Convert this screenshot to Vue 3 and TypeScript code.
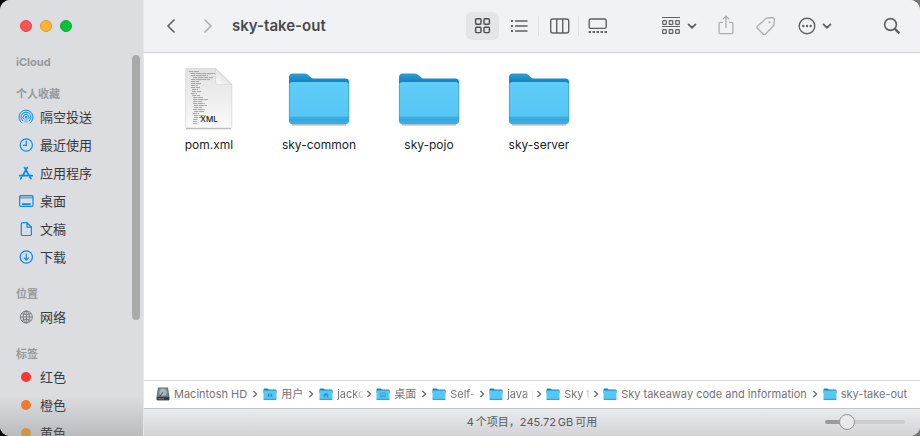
<script setup lang="ts">
import { computed, ref } from 'vue'

type ViewMode = 'icons' | 'list' | 'columns' | 'gallery'

interface Crumb {
  name: string
  kind: 'disk' | 'folder' | 'users' | 'home' | 'desktop'
  clipped?: boolean
}

const favorites = [
  { name: '隔空投送', icon: 'airdrop' },
  { name: '最近使用', icon: 'recent' },
  { name: '应用程序', icon: 'apps' },
  { name: '桌面', icon: 'desktop' },
  { name: '文稿', icon: 'document' },
  { name: '下载', icon: 'download' },
]

const tags = [
  { name: '红色', color: '#fc3438' },
  { name: '橙色', color: '#f97a2c' },
  { name: '黄色', color: '#f2a62e' },
]

const files = [
  { name: 'pom.xml', folder: false },
  { name: 'sky-common', folder: true },
  { name: 'sky-pojo', folder: true },
  { name: 'sky-server', folder: true },
]

const crumbs: Crumb[] = [
  { name: 'Macintosh HD', kind: 'disk' },
  { name: '用户', kind: 'users' },
  { name: 'jackc', kind: 'home', clipped: true },
  { name: '桌面', kind: 'desktop' },
  { name: 'Self-', kind: 'folder', clipped: true },
  { name: 'java p', kind: 'folder', clipped: true },
  { name: 'Sky t', kind: 'folder', clipped: true },
  { name: 'Sky takeaway code and information', kind: 'folder' },
  { name: 'sky-take-out', kind: 'folder' },
]

// Indent and length of each source line on the document thumbnail.
const codeLines: [number, number][] = [
  [4, 10], [6, 24], [6, 17], [8, 20], [6, 19], [6, 8], [6, 10], [6, 7], [6, 9], [7, 6],
  [7, 9], [6, 6], [7, 8], [8, 10], [8, 15], [8, 9], [8, 12], [9, 13], [9, 8], [8, 12],
  [9, 10], [8, 6], [9, 12], [9, 9], [8, 5], [8, 5], [8, 5],
]

const view = ref<ViewMode>('icons')
const zoom = ref(22)
const fill = computed(() => `${zoom.value}%`)
</script>

<template>
  <div class="window">
    <aside class="sidebar">
      <div class="lights">
        <button class="light close" aria-label="Close"></button>
        <button class="light minimize" aria-label="Minimize"></button>
        <button class="light expand" aria-label="Zoom"></button>
      </div>
      <nav class="places">
        <h2>iCloud</h2>
        <h2 class="fav">个人收藏</h2>
        <ul>
          <li v-for="item in favorites" :key="item.name">
            <a href="#">
              <svg v-if="item.icon === 'airdrop'" class="place-icon" viewBox="0 0 16 16">
                <path d="M4.2 14A7 7 0 1 1 11.8 14M5.2 12.1A4.9 4.9 0 1 1 10.8 12.1M6.3 10.4A2.8 2.8 0 1 1 9.7 10.4" stroke-width="1" />
                <path d="M8 8.2L5.8 13.6H10.2Z" fill="currentColor" stroke="none" opacity=".35" />
                <circle cx="8" cy="8.2" r="1.1" fill="currentColor" stroke="none" />
              </svg>
              <svg v-else-if="item.icon === 'recent'" class="place-icon" viewBox="0 0 16 16">
                <circle cx="8.3" cy="8" r="6.1" />
                <path d="M8.3 3.8V8.4H5" />
              </svg>
              <svg v-else-if="item.icon === 'apps'" class="place-icon" viewBox="0 0 16 16">
                <path d="M9.2 2.6L4.6 10.8M6.6 2.6L12.9 13.6M1.6 10.7H9.2M12 10.7H14.2M3.3 12.7L2.7 13.7" stroke-width="1.8" stroke-linecap="round" />
              </svg>
              <svg v-else-if="item.icon === 'desktop'" class="place-icon" viewBox="0 0 16 16">
                <rect x="1.6" y="2.6" width="13.4" height="10.8" rx="1.2" />
                <path d="M1.6 4.6H15" opacity=".6" stroke-width="1.8" />
                <path d="M4 11.2H12.6" stroke-width="1.8" />
              </svg>
              <svg v-else-if="item.icon === 'document'" class="place-icon" viewBox="0 0 16 16">
                <path d="M4.6 1.6H9L13.4 6.1V13.2A1.3 1.3 0 0 1 12.1 14.5H4.6A1.3 1.3 0 0 1 3.3 13.2V2.9A1.3 1.3 0 0 1 4.6 1.6ZM9 1.9V6.2H13.2" />
              </svg>
              <svg v-else class="place-icon" viewBox="0 0 16 16">
                <circle cx="8.3" cy="8" r="6.1" />
                <path d="M8.3 4.6V11M5.8 8.7L8.3 11.2L10.8 8.7" />
              </svg>
              <span>{{ item.name }}</span>
            </a>
          </li>
        </ul>
        <h2 class="spaced">位置</h2>
        <ul>
          <li>
            <a href="#">
              <svg class="place-icon grey" viewBox="0 0 16 16">
                <circle cx="8.3" cy="8" r="6" />
                <ellipse cx="8.3" cy="8" rx="3" ry="6" />
                <path d="M8.3 2V14M2.3 8H14.3M3.6 4.7Q8.3 6.4 13 4.7M3.6 11.3Q8.3 9.6 13 11.3" />
              </svg>
              <span>网络</span>
            </a>
          </li>
        </ul>
        <h2 class="spaced">标签</h2>
        <ul>
          <li v-for="tag in tags" :key="tag.name">
            <a href="#">
              <i class="dot" :style="{ background: tag.color }"></i>
              <span>{{ tag.name }}</span>
            </a>
          </li>
        </ul>
      </nav>
      <div class="scroll-thumb"></div>
      <div class="fade"></div>
    </aside>

    <main class="main">
      <header class="toolbar">
        <button class="tool" aria-label="Back">
          <svg width="14" height="20" viewBox="0 0 14 20"><path d="M10.5 3.5L4 10L10.5 16.5" stroke-width="1.6" /></svg>
        </button>
        <button class="tool forward dim" aria-label="Forward">
          <svg width="14" height="20" viewBox="0 0 14 20"><path d="M4.5 3.5L11 10L4.5 16.5" stroke-width="1.6" /></svg>
        </button>
        <h1>sky-take-out</h1>

        <div class="views">
          <button class="view" :class="{ active: view === 'icons' }" aria-label="Icons" @click="view = 'icons'">
            <svg width="20" height="20" viewBox="0 0 20 20">
              <rect x="2.6" y="2.8" width="5.4" height="5.4" rx="1" />
              <rect x="11" y="2.8" width="5.4" height="5.4" rx="1" />
              <rect x="2.6" y="11.2" width="5.4" height="5.4" rx="1" />
              <rect x="11" y="11.2" width="5.4" height="5.4" rx="1" />
            </svg>
          </button>
          <button class="view" :class="{ active: view === 'list' }" aria-label="List" @click="view = 'list'">
            <svg width="20" height="20" viewBox="0 0 20 20">
              <path d="M6 5H18.5M6 10H18.5M6 15H18.5" />
              <path d="M2 5H4M2 10H4M2 15H4" stroke-width="2" />
            </svg>
          </button>
          <span class="rule"></span>
          <button class="view" :class="{ active: view === 'columns' }" aria-label="Columns" @click="view = 'columns'">
            <svg width="22" height="20" viewBox="0 0 22 20">
              <rect x="2.7" y="3" width="18" height="14" rx="2" />
              <path d="M8.7 3V17M14.7 3V17" />
            </svg>
          </button>
          <span class="rule"></span>
          <button class="view" :class="{ active: view === 'gallery' }" aria-label="Gallery" @click="view = 'gallery'">
            <svg width="22" height="20" viewBox="0 0 22 20">
              <rect x="1.2" y="3" width="17" height="9.4" rx="1.6" />
              <path d="M.6 16H19.4" stroke-width="2.2" stroke-dasharray="2.4 1.6" />
            </svg>
          </button>
        </div>

        <button class="tool group" aria-label="Group">
          <svg width="20" height="20" viewBox="0 0 20 20">
            <path d="M1 1.5H19M1 10.5H19" stroke-width="1.2" />
            <g stroke-width="1.2">
              <rect x="1.7" y="4.7" width="3.6" height="3.6" rx=".6" />
              <rect x="8.2" y="4.7" width="3.6" height="3.6" rx=".6" />
              <rect x="14.7" y="4.7" width="3.6" height="3.6" rx=".6" />
              <rect x="1.7" y="13.7" width="3.6" height="3.6" rx=".6" />
              <rect x="8.2" y="13.7" width="3.6" height="3.6" rx=".6" />
              <rect x="14.7" y="13.7" width="3.6" height="3.6" rx=".6" />
            </g>
          </svg>
          <svg width="10" height="8" viewBox="0 0 10 8"><path d="M1.5 2.4L5 5.7L8.5 2.4" stroke-width="1.8" stroke-linecap="round" /></svg>
        </button>
        <button class="tool share dim" aria-label="Share">
          <svg width="18" height="22" viewBox="0 0 18 22">
            <path d="M6 7.4H3.4A1.3 1.3 0 0 0 2.1 8.7V17.4A1.3 1.3 0 0 0 3.4 18.7H14.6A1.3 1.3 0 0 0 15.9 17.4V8.7A1.3 1.3 0 0 0 14.6 7.4H12M9 13V1.2M5.7 4.4L9 1.1L12.3 4.4" stroke-width="1.3" />
          </svg>
        </button>
        <button class="tool tag dim" aria-label="Tags">
          <svg width="22" height="22" viewBox="0 0 22 22">
            <path d="M12.3 3L17.6 2.6A1.8 1.8 0 0 1 19.4 4.4L19 9.4A2 2 0 0 1 18.4 10.7L10.4 19.3A1.4 1.4 0 0 1 8.4 19.3L2.3 13.2A1.4 1.4 0 0 1 2.3 11.2L11 3.6A2 2 0 0 1 12.3 3Z" stroke-width="1.3" />
            <circle cx="14.6" cy="7.3" r="1.1" fill="currentColor" stroke="none" />
          </svg>
        </button>
        <button class="tool more" aria-label="More">
          <svg width="18" height="18" viewBox="0 0 18 18">
            <circle cx="9" cy="9" r="7.8" />
            <g fill="currentColor" stroke="none"><circle cx="5.3" cy="9" r="1.2" /><circle cx="9" cy="9" r="1.2" /><circle cx="12.7" cy="9" r="1.2" /></g>
          </svg>
          <svg width="10" height="8" viewBox="0 0 10 8"><path d="M1.5 2.4L5 5.7L8.5 2.4" stroke-width="1.8" stroke-linecap="round" /></svg>
        </button>
        <button class="tool search" aria-label="Search">
          <svg width="20" height="20" viewBox="0 0 20 20">
            <circle cx="8.5" cy="8.5" r="5.9" stroke-width="1.6" />
            <path d="M12.9 12.9L17.4 17.4" stroke-width="2.2" />
          </svg>
        </button>
      </header>

      <section class="files">
        <a v-for="file in files" :key="file.name" href="#" class="file">
          <svg v-if="file.folder" class="file-icon" viewBox="0 0 64 64">
            <defs>
              <linearGradient id="folder-back" x1="0" y1="0" x2="0" y2="1">
                <stop offset="0" stop-color="#2ba0d4" />
                <stop offset=".3" stop-color="#1687c2" />
                <stop offset="1" stop-color="#1687c2" />
              </linearGradient>
              <linearGradient id="folder-front" x1="0" y1="0" x2="0" y2="1">
                <stop offset="0" stop-color="#5fcdf8" />
                <stop offset="1" stop-color="#55c5f5" />
              </linearGradient>
            </defs>
            <path d="M5 58.8H59" stroke="#7b8d98" stroke-width="1.4" opacity=".6" />
            <path d="M2 11.5Q2 7.6 5.6 7.6H17.5Q19.6 7.6 21.2 9L24.2 11.4Q25.6 12.6 27.6 12.6H58.4Q62 12.6 62 16.2V30H2Z" fill="url(#folder-back)" />
            <path d="M2 20Q2 16 5.6 16H58.4Q62 16 62 20V54.6Q62 58 58.4 58H5.6Q2 58 2 54.6Z" fill="url(#folder-front)" />
            <path d="M2 51.5H62V54.6Q62 58 58.4 58H5.6Q2 58 2 54.6Z" fill="#3aaee2" />
            <path d="M2 51.2H62M2 53.9H62" stroke="#2f9fd4" stroke-width=".7" />
            <path d="M2.4 19V55M61.6 19V55" stroke="#36a5d8" stroke-width=".8" />
          </svg>
          <svg v-else class="file-icon" viewBox="0 0 64 64">
            <defs>
              <linearGradient id="paper" x1="0" y1="0" x2="0" y2="1">
                <stop offset="0" stop-color="#e2e2e2" />
                <stop offset="1" stop-color="#fafafa" />
              </linearGradient>
              <linearGradient id="curl" x1="0" y1="1" x2="1" y2="0">
                <stop offset="0" stop-color="#ffffff" />
                <stop offset=".5" stop-color="#e4e4e4" />
                <stop offset="1" stop-color="#bdbdbd" />
              </linearGradient>
            </defs>
            <path d="M9 62.6H54" stroke="#b3b3b3" stroke-width="1.2" />
            <path d="M10 2.4H38.6L54.8 18.4V60.6Q54.8 62 53.4 62H10Q8.6 62 8.6 60.6V3.8Q8.6 2.4 10 2.4Z" fill="url(#paper)" stroke="#d2d2d2" stroke-width=".7" />
            <path
              v-for="(line, i) in codeLines"
              :key="i"
              :d="`M${8 + line[0]} ${5.6 + i * 2}h${line[1]}`"
              stroke="#9a9a9a"
              stroke-width=".9"
              stroke-dasharray="4 .7 6 .5"
            />
            <path d="M38.6 2.4V16Q38.6 18.4 41 18.4H54.8Z" fill="url(#curl)" stroke="#d2d2d2" stroke-width=".6" />
            <text x="32" y="56" text-anchor="middle" class="badge">XML</text>
          </svg>
          <span>{{ file.name }}</span>
        </a>
      </section>

      <nav class="path">
        <a v-for="(crumb, i) in crumbs" :key="crumb.name" href="#" class="crumb">
          <svg v-if="crumb.kind === 'disk'" class="crumb-icon" viewBox="0 0 14 14">
            <path d="M2 .6H12L13.3 9V12.4Q13.3 13.2 12.5 13.2H1.5Q.7 13.2 .7 12.4V9Z" fill="#59656a" />
            <path d="M2.5 1H11.5L12.6 9.4H1.4Z" fill="#76838a" />
            <ellipse cx="7" cy="5.2" rx="3.6" ry="3.6" fill="#a9b7b9" />
            <path d="M7 5.2L4 9" stroke="#4a5558" />
            <path d="M.7 10H13.3V12.4Q13.3 13.2 12.5 13.2H1.5Q.7 13.2 .7 12.4Z" fill="#364044" />
            <path d="M2 11.8H8" stroke="#7f8b8f" stroke-width=".8" />
          </svg>
          <svg v-else class="crumb-icon" viewBox="0 0 14 14">
            <path d="M.5 2.4Q.5 1.4 1.5 1.4H4.4L5.8 2.4H12.5Q13.5 2.4 13.5 3.4V6H.5Z" fill="#1985b8" />
            <path d="M.5 4.4Q.5 3.6 1.3 3.6H12.7Q13.5 3.6 13.5 4.4V12Q13.5 13 12.5 13H1.5Q.5 13 .5 12Z" fill="#55c8f7" />
            <path d="M.5 11.8H13.5V12Q13.5 13 12.5 13H1.5Q.5 13 .5 12Z" fill="#34a4d4" />
            <path v-if="crumb.kind === 'users'" d="M6.4 6Q4.2 7.2 4.7 9.8H6.3ZM7.6 6Q9.8 7.2 9.3 9.8H7.7Z" fill="#1c8fca" />
            <path v-if="crumb.kind === 'home'" d="M7 5.4L10.2 8.1H9.4V10.4H7.8V8.8H6.2V10.4H4.6V8.1H3.8Z" fill="#2b9bd0" />
            <path v-if="crumb.kind === 'desktop'" d="M4.4 6H9.6V9.8H4.4ZM5.2 8.7H8.8" fill="none" stroke="#2b9bd0" stroke-width=".8" />
          </svg>
          <span class="crumb-name" :class="{ clipped: crumb.clipped }">{{ crumb.name }}</span>
          <svg v-if="i < crumbs.length - 1" class="next" :class="{ tight: crumb.clipped }" viewBox="0 0 6 8">
            <path d="M1.4 1L4.6 4L1.4 7" />
          </svg>
        </a>
      </nav>

      <footer class="status">
        <p>4&#8201;个项目，245.72&#8201;GB&#8201;可用</p>
        <input v-model.number="zoom" type="range" min="0" max="100" aria-label="Icon size" :style="{ '--fill': fill }" />
      </footer>
    </main>
  </div>
</template>

<style>
body {
  background: linear-gradient(90deg, #08080a 0 50%, #77776f 50%);
}
</style>

<style scoped>
* {
  box-sizing: border-box;
}

.window {
  display: flex;
  height: 100vh;
  overflow: hidden;
  border-radius: 10px;
  background: #fff;
  font-family: Inter, "Noto Sans CJK SC", sans-serif;
  color: #262626;
}

h1, h2, p, ul {
  margin: 0;
  padding: 0;
}

ul {
  list-style: none;
}

a {
  color: inherit;
  text-decoration: none;
}

button {
  padding: 0;
  border: 0;
  background: none;
  color: #5f6063;
  font: inherit;
}

svg {
  display: block;
  flex: none;
}

.sidebar {
  position: relative;
  flex: none;
  width: 144px;
  overflow: hidden;
  border-right: 1px solid #e6e7ea;
  background: #dcdde1;
}

.lights {
  display: flex;
  gap: 8px;
  padding: 20px 20px 0;
}

.light {
  width: 12px;
  height: 12px;
  border: 1px solid;
  border-radius: 50%;
}

.close {
  border-color: #e2443f;
  background: #ff5450;
}

.minimize {
  border-color: #e09a2b;
  background: #ffb233;
}

.expand {
  border-color: #12a72f;
  background: #05c238;
}

.places {
  padding: 22px 16px 0;
}

h2 {
  height: 16px;
  font-size: 11px;
  line-height: 16px;
  font-weight: 700;
  color: #97989b;
}

.fav {
  margin-top: 16px;
  margin-bottom: 1px;
}

.spaced {
  margin-top: 15px;
  margin-bottom: 1px;
}

li a {
  display: flex;
  align-items: center;
  gap: 6px;
  height: 28px;
  padding-left: 2px;
  font-size: 13px;
  line-height: 28px;
  color: #39393b;
  white-space: nowrap;
}

.place-icon {
  width: 16px;
  height: 16px;
  fill: none;
  color: #078ce8;
  stroke: currentColor;
  stroke-width: 1.2;
}

.grey {
  color: #717275;
  stroke-width: 0.9;
}

.dot {
  width: 10px;
  height: 10px;
  margin: 0 3px;
  border-radius: 50%;
}

.scroll-thumb {
  position: absolute;
  top: 55px;
  right: 3px;
  width: 8px;
  height: 265px;
  border-radius: 4px;
  background: #a9aaac;
}

.fade {
  position: absolute;
  inset: auto 0 0;
  height: 40px;
  background: linear-gradient(rgba(110, 110, 112, 0), rgba(110, 110, 112, 0.3));
}

.main {
  display: flex;
  flex: 1;
  flex-direction: column;
  min-width: 0;
}

.toolbar {
  display: flex;
  flex: none;
  align-items: center;
  height: 53px;
  padding: 0 14px 0 13px;
  border-bottom: 1px solid #cfd0d1;
  background: #f1f2f6;
}

.toolbar svg {
  fill: none;
  stroke: currentColor;
  stroke-width: 1.4;
  stroke-linecap: butt;
}

.tool {
  display: flex;
  flex: none;
  align-items: center;
  justify-content: center;
  width: 28px;
  height: 28px;
}

.dim {
  color: #adaeb1;
}

.forward {
  margin-left: 8px;
}

h1 {
  margin-left: 11px;
  font-size: 15px;
  line-height: 20px;
  font-weight: 600;
  color: #48494b;
  white-space: nowrap;
}

.views {
  display: flex;
  align-items: center;
  gap: 3px;
  margin-left: auto;
}

.view {
  display: flex;
  align-items: center;
  justify-content: center;
  width: 33px;
  height: 28px;
  border-radius: 6px;
}

.active {
  background: #e4e5e8;
  color: #4c4d50;
}

.rule {
  width: 1px;
  height: 20px;
  background: #dfe0e3;
}

.group,
.more {
  gap: 6px;
  width: 36px;
}

.group {
  margin-left: 46px;
}

.share {
  margin-left: 15px;
}

.tag {
  margin-left: 12px;
}

.more {
  margin-left: 17px;
}

.search {
  margin-left: 45px;
}

.files {
  display: grid;
  flex: 1;
  grid-template-columns: repeat(auto-fill, 110px);
  align-content: start;
  padding: 13px 10px 0;
  background: #fff;
}

.file {
  display: flex;
  flex-direction: column;
  align-items: center;
  gap: 6px;
  font-size: 12px;
  line-height: 18px;
  color: #222;
}

.file-icon {
  width: 64px;
  height: 64px;
}

.badge {
  font: 500 8px Inter, sans-serif;
  fill: #222;
}

.path {
  display: flex;
  flex: none;
  align-items: center;
  height: 28px;
  padding: 0 12px 1px;
  border-top: 1px solid #d9d9da;
  background: #fff;
  overflow: hidden;
}

.crumb {
  display: flex;
  flex: none;
  align-items: center;
  font-size: 11px;
  line-height: 16px;
  color: #747476;
  white-space: nowrap;
}

.crumb-icon {
  width: 14px;
  height: 14px;
  margin-right: 4px;
}

.clipped {
  width: 26px;
  overflow: hidden;
  -webkit-mask-image: linear-gradient(90deg, #000 70%, rgba(0, 0, 0, 0.15));
  mask-image: linear-gradient(90deg, #000 70%, rgba(0, 0, 0, 0.15));
}

.next {
  width: 6px;
  height: 8px;
  margin: 0 5px;
  fill: none;
  stroke: #6b6b6d;
  stroke-width: 1.3;
}

.tight {
  margin: 0 4px 0 3px;
}

.status {
  display: grid;
  flex: none;
  grid-template-columns: 1fr auto 1fr;
  align-items: center;
  height: 28px;
  padding: 0 15px 1px;
  border-top: 1px solid #c3c3c6;
  background: linear-gradient(#eaebef, #d3d3d7);
}

.status p {
  grid-column: 2;
  font-size: 11px;
  line-height: 16px;
  color: #58595c;
}

input[type="range"] {
  justify-self: end;
  width: 80px;
  height: 16px;
  margin: 0;
  appearance: none;
  background: none;
}

input[type="range"]::-webkit-slider-runnable-track {
  height: 4px;
  border-radius: 2px;
  background: linear-gradient(90deg, #9b9b9f var(--fill), #cdcdd0 var(--fill));
}

input[type="range"]::-webkit-slider-thumb {
  width: 16px;
  height: 16px;
  margin-top: -6px;
  border: 1px solid #96969a;
  border-radius: 50%;
  appearance: none;
  background: #e9e9ed;
}
</style>
